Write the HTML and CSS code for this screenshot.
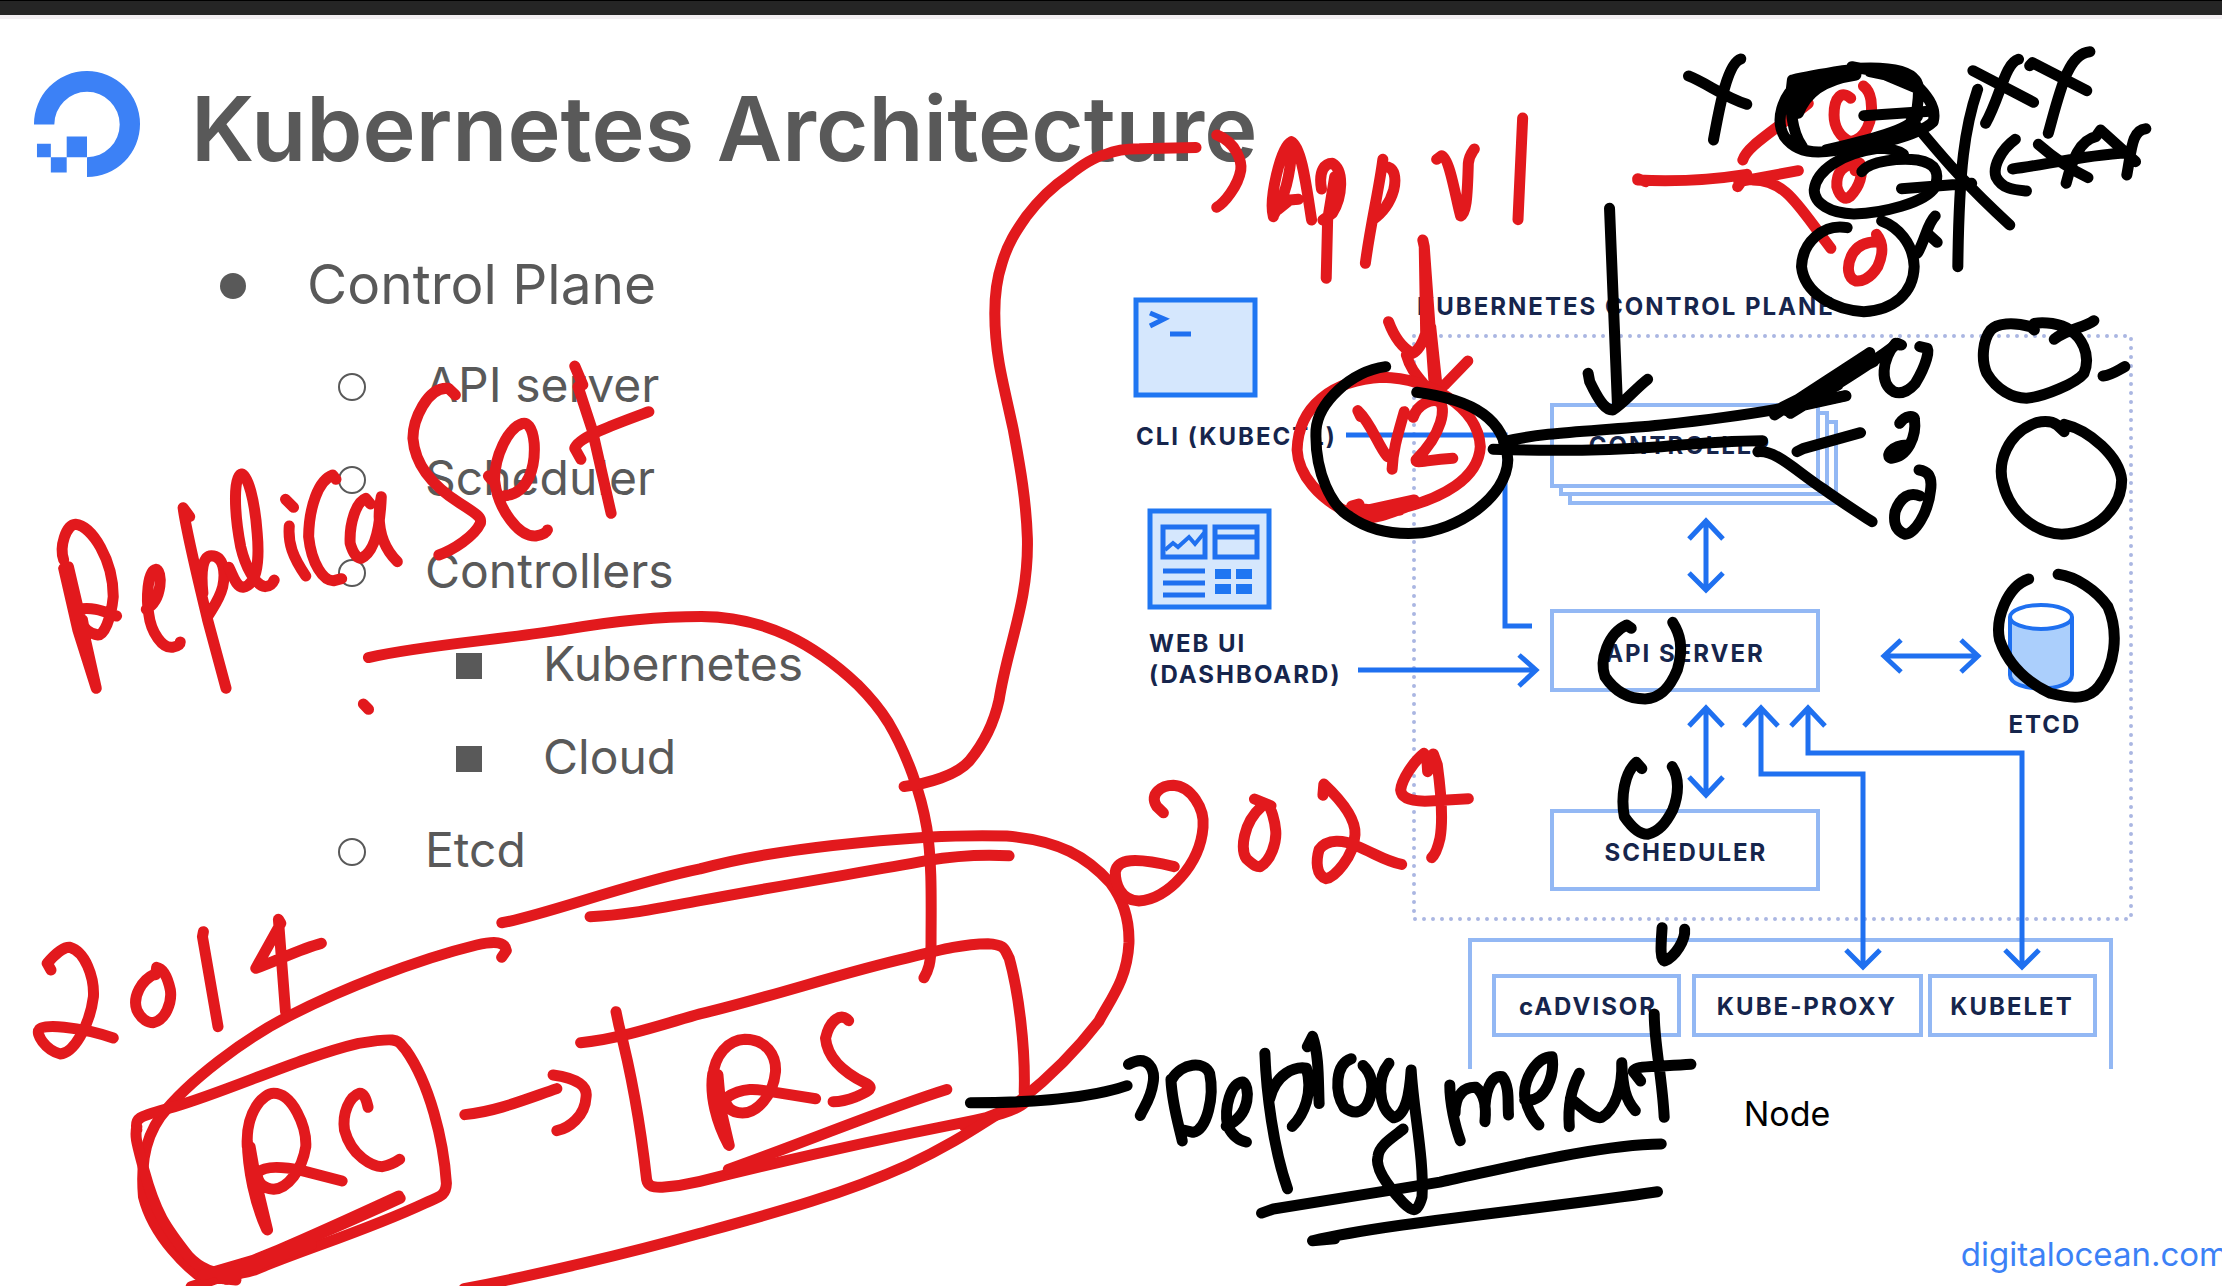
FILE: index.html
```html
<!DOCTYPE html>
<html lang="en">
<head>
<meta charset="utf-8">
<title>Kubernetes Architecture</title>
<link rel="stylesheet" href="styles.css">
</head>
<body>
<div class="screen">
  <div class="window-bar"></div>

  <header class="slide-header">
    <svg class="logo" viewBox="0 0 108 108" role="img" aria-label="DigitalOcean">
      <path d="M0 54A53.5 53.5 0 1 1 53.500 107V87A33 33 0 1 0 20.500 54Z"/>
      <path d="M33 66h20.500v21H33zM17 87h16v15.500H17zM3 73.500h14V87H3z"/>
    </svg>
    <h1>Kubernetes Architecture</h1>
  </header>

  <main class="slide-body">
    <ul class="outline">
      <li><div class="item item-top">Control Plane</div>
        <ul class="level-2">
          <li><div class="item">API server</div></li>
          <li><div class="item">Scheduler</div></li>
          <li><div class="item">Controllers</div>
            <ul class="level-3">
              <li><div class="item">Kubernetes</div></li>
              <li><div class="item">Cloud</div></li>
            </ul>
          </li>
          <li><div class="item">Etcd</div></li>
        </ul>
      </li>
    </ul>

    <figure class="architecture">
      <svg class="diagram" viewBox="1100 280 1122 800">
        <!-- control plane and node boundaries -->
        <rect class="plane" x="1414" y="336" width="717" height="583"/>
        <path class="box" d="M1470 1069V940H2111V1069"/>

        <!-- components -->
        <path class="box" d="M1570 495V503H1836V422H1827M1561 486V494H1827V413H1818"/>
        <rect class="box" x="1552" y="405" width="266" height="81"/>
        <rect class="box" x="1552" y="611" width="266" height="79"/>
        <rect class="box" x="1552" y="811" width="266" height="78"/>
        <rect class="box" x="1494" y="976" width="185" height="59"/>
        <rect class="box" x="1694" y="976" width="227" height="59"/>
        <rect class="box" x="1930" y="976" width="165" height="59"/>

        <!-- terminal -->
        <rect class="icon" x="1136" y="300" width="119" height="95"/>
        <path class="wire" d="M1150 313L1164 319L1150 326M1170 334H1191"/>

        <!-- dashboard -->
        <rect class="icon" x="1150" y="511" width="119" height="96"/>
        <path class="wire" d="M1163 527H1205V557H1163ZM1215 527H1257V557H1215ZM1215 537H1257M1163 571H1205M1163 583H1205M1163 595H1205"/>
        <path class="graph" d="M1165 550L1173 543L1178 547L1189 537L1195 544L1204 533"/>
        <path class="solid" d="M1215 569h16v10h-16zM1236 569h16v10h-16zM1215 584h16v10h-16zM1236 584h16v10h-16z"/>

        <!-- connections -->
        <path class="wire" d="M1346 435H1505V626H1532M1358 670H1536M1519 655L1536 670L1519 686"/>
        <path class="wire" d="M1706 523V588M1689 539L1706 521L1723 539M1689 573L1706 590L1723 573"/>
        <path class="wire" d="M1706 710V793M1689 726L1706 708L1723 726M1689 777L1706 795L1723 777"/>
        <path class="wire" d="M1761 710V774H1863V965M1744 726L1761 708L1778 726M1846 950L1863 967L1880 950"/>
        <path class="wire" d="M1808 710V753H2022V965M1791 726L1808 708L1825 726M2005 950L2022 967L2039 950"/>
        <path class="wire" d="M1884 656H1978M1901 640L1884 656L1901 672M1961 640L1978 656L1961 672"/>

        <!-- etcd -->
        <path class="drum" d="M2010 617V675C2010 693 2072 693 2072 675V617"/>
        <ellipse class="drum-top" cx="2041" cy="617" rx="31" ry="12"/>

        <g class="label">
          <text x="1417" y="315">KUBERNETES CONTROL PLANE</text>
          <text x="1136" y="445">CLI (KUBECTL)</text>
          <text x="1149" y="652">WEB UI</text>
          <text x="1149" y="683">(DASHBOARD)</text>
          <g text-anchor="middle">
            <text x="1680" y="454">CONTROLLER</text>
            <text x="1685" y="662">API SERVER</text>
            <text x="1686" y="861">SCHEDULER</text>
            <text x="2045" y="733">ETCD</text>
            <text x="1588" y="1015">cADVISOR</text>
            <text x="1807" y="1015">KUBE-PROXY</text>
            <text x="2012" y="1015">KUBELET</text>
          </g>
        </g>
      </svg>
      <figcaption>Node</figcaption>
    </figure>
  </main>

  <footer class="slide-footer"><a href="#">digitalocean.com</a></footer>

  <!-- freehand pen strokes over the slide, grouped by board region -->
  <svg class="ink" viewBox="0 0 2222 1286" aria-hidden="true">
    <g class="red">
      <g transform="translate(0 400) scale(.4719 .3333)">
        <path d="M135 505L165 690L204 865M145 500L178 700L204 865M135 480C125 440 140 375 160 373C195 378 240 480 240 590C235 660 220 705 208 705C195 702 175 690 175 660M165 628C200 620 220 635 247 648M150 560L190 780"/>
        <path d="M310 628C345 600 345 510 330 508C312 512 310 600 315 640C320 700 345 745 365 742C380 738 382 733 382 726"/>
        <path d="M402 350L388 323C395 400 430 600 440 660L479 865M430 580C425 510 430 468 448 467C475 468 478 520 472 560C465 600 450 625 440 650"/>
        <path d="M485 502C495 530 500 560 515 562C545 555 550 480 545 400C540 300 525 225 512 222C495 225 495 330 510 440C520 500 540 555 562 560C575 558 578 550 581 540"/>
        <path d="M605 298L622 322M613 378C610 430 620 470 648 528"/>
        <path d="M712 238L705 225C675 240 655 320 654 410C660 490 685 545 708 542L724 536"/>
        <path d="M785 312L775 295C755 305 740 370 742 430C750 470 760 475 765 475C790 460 805 400 808 290C795 380 810 440 842 485"/>
        <path d="M965 -15L950 -35C905 -40 875 60 875 115C880 210 930 270 975 310C1020 350 1020 355 1018 370C1005 410 960 450 930 465"/>
        <path d="M1035 228L1042 240M1070 287C1120 280 1135 200 1132 130C1128 75 1115 68 1108 70C1075 85 1048 170 1048 240C1055 330 1100 410 1135 408C1150 405 1158 398 1160 390"/>
        <path d="M1218 -102L1235 -45L1225 -40L1255 90L1295 340M1375 35C1310 70 1225 110 1218 145L1231 178"/>
        <path d="M770 912L781 928"/>
      </g>
      <g transform="scale(1.4171)">
        <path d="M260 464C300 455 350 452 400 444C440 437 470 435 495 435C540 435 575 455 605 483C612 490 622 502 627 510C640 532 650 560 654 584C658 610 657 640 657 666C657 680 655 685 652 690"/>
        <path d="M638 555C655 553 675 547 684 537C694 525 701 512 705 494C711 455 726 425 725 380C724 350 719 325 715 303C710 280 707 268 705 256C703 244 702 232 702 221C702 205 704 195 707 186C711 172 717 163 724 153C733 141 742 132 754 124C765 115 772 111 780 109C787 106 795 105 804 105L844 104"/>
      </g>
      <g transform="translate(0 820) scale(.4719 .3333)">
        <path d="M108 450L100 430C115 405 135 380 148 382C180 395 200 470 198 530C190 620 155 700 128 702C95 690 75 640 83 630C85 610 170 620 240 654"/>
        <path d="M328 462C300 480 280 530 290 570C300 600 315 608 325 608C350 600 365 550 361 510C355 470 345 445 332 442L330 464"/>
        <path d="M431 335L429 350L462 620M681 370C640 385 590 420 542 445L595 310L590 298L605 575"/>
        <path d="M1063 412L1073 392C1070 365 1050 362 1010 375C880 420 720 510 610 590C520 655 400 780 340 890C300 970 300 1060 304 1130C325 1250 400 1350 440 1385L470 1370L405 1400M430 1370L500 1380"/>
        <path d="M290 930C285 890 295 890 370 860C480 815 640 710 760 670C850 650 840 660 860 690C910 790 940 960 946 1090C945 1130 930 1130 900 1150C780 1230 640 1290 540 1350C460 1385 420 1340 400 1310C350 1220 330 1180 305 1050C290 970 285 950 290 920"/>
        <path d="M848 1135C750 1200 600 1290 470 1370M845 1128C750 1190 640 1260 590 1290L470 1360M430 1365L600 1295M480 1378L640 1275M500 1355L660 1275"/>
        <path d="M530 980L545 1100L567 1230M524 960C525 1050 540 1150 565 1228M524 980C520 870 560 820 580 820C620 820 650 920 648 980C640 1050 610 1105 580 1108C555 1105 545 1085 545 1060C560 1035 600 1040 640 1052L725 1083"/>
        <path d="M780 862C775 830 770 820 762 820C740 830 725 880 730 930C745 1010 790 1040 810 1040C830 1035 840 1025 847 1018"/>
        <path d="M985 884C1050 875 1110 840 1180 806M1172 765C1225 775 1245 800 1242 830C1240 890 1205 925 1180 932"/>
      </g>
      <g transform="translate(700 700) scale(.4719 .3737)">
        <path d="M-253 917C-160 905 -60 860 0 840C150 795 300 730 440 690C520 665 560 653 610 652C650 655 645 670 655 690C675 780 690 930 687 1050"/>
        <path d="M-178 834L-172 870C-145 1000 -125 1150 -113 1284C-110 1305 -95 1303 -80 1304C-40 1300 0 1288 0 1288C200 1225 400 1170 560 1130C620 1115 670 1100 690 1075M560 1140L680 1082"/>
        <path d="M523 1042C400 1090 250 1170 60 1256L150 1240"/>
        <path d="M27 1000C20 1060 35 1130 60 1190M38 1003L45 1100L62 1192M27 1010C30 950 60 910 95 908C140 908 162 950 160 995C155 1060 120 1105 90 1105C65 1105 52 1085 55 1065C90 1035 120 1040 160 1050L245 1067"/>
        <path d="M315 858C300 835 275 855 266 905C270 960 310 1000 350 1025C375 1040 350 1050 330 1062C310 1072 295 1075 282 1075"/>
        <path d="M-420 596C-340 580 -150 490 0 452C150 400 350 378 480 367C560 362 600 362 650 364C760 375 820 420 870 490C900 540 910 600 909 650C905 750 870 800 845 860C790 950 740 1010 680 1070C600 1130 550 1180 440 1245C300 1325 150 1375 0 1427C-150 1480 -350 1540 -500 1575"/>
        <path d="M-233 580C-150 575 -80 555 0 537C200 490 350 460 480 430C550 415 600 413 655 417"/>
        <path d="M982 302L968 285C950 250 980 228 1003 228C1040 230 1070 290 1066 340C1060 440 990 535 930 538C890 535 880 490 880 460C885 425 920 420 1005 446"/>
        <path d="M1175 265L1210 283M1190 285C1150 330 1145 400 1158 425C1175 445 1180 446 1187 446C1210 430 1222 380 1220 350C1218 320 1210 290 1205 285"/>
        <path d="M1320 255L1322 225C1360 270 1390 320 1388 360C1385 420 1345 475 1327 478C1305 470 1305 430 1312 400C1330 370 1365 375 1390 390C1430 410 1450 430 1487 440"/>
      </g>
      <g transform="translate(1380 730) scale(.3333)">
        <path d="M143 125L140 80L132 70C100 95 65 150 62 180C65 210 110 215 150 213L265 206M160 72L172 105C185 200 188 280 180 325C172 360 165 375 155 383"/>
      </g>
      <g transform="translate(1380 90) scale(.3333)">
        <path d="M170 208L185 197C210 205 230 340 242 378C258 370 262 330 265 220C268 195 278 185 283 177M428 84L414 389"/>
      </g>
      <g transform="translate(700 0) scale(.4719 .3333)">
        <path d="M1095 405C1140 430 1148 490 1146 510C1140 560 1110 610 1095 622"/>
        <path d="M1215 650C1205 600 1230 440 1253 425C1275 440 1285 560 1296 660M1216 645C1240 590 1250 530 1255 440M1225 628L1250 600L1268 598"/>
        <path d="M1317 567C1310 510 1325 490 1340 490C1365 510 1362 590 1340 640L1320 660M1345 530L1330 660L1327 835"/>
        <path d="M1447 478C1440 560 1420 680 1410 790M1447 500C1475 495 1475 540 1470 570C1460 620 1440 645 1425 660"/>
      </g>
      <g transform="translate(1100 260) scale(.3571 .3333)">
        <path d="M904 -60L908 -40L936 375M908 -40L912 220C900 260 885 275 875 280C840 260 820 220 808 185M858 285C870 330 890 350 905 370M1030 303L965 375L944 380L926 200L942 370"/>
        <path d="M705 738L725 732L730 755L880 720C800 745 760 760 710 765C610 720 555 640 552 570C555 440 650 360 790 352C920 355 1060 440 1065 560C1060 660 950 715 860 740C810 760 780 775 740 775M720 745L800 755M730 768L840 750"/>
        <path d="M730 470L722 452C760 490 780 560 805 590M852 455C835 520 820 570 818 628M877 472C890 430 930 415 950 425C970 440 960 520 885 600C885 612 910 600 988 595"/>
      </g>
      <g transform="translate(1600 0) scale(.3967 .3333)">
        <path d="M95 540C180 545 280 540 370 523L347 560M95 536L115 545M360 480C370 440 430 400 525 310M350 545L500 512M385 540C470 540 500 620 582 745"/>
        <path d="M632 295C610 270 590 290 590 345C590 380 605 410 630 425C670 420 690 360 683 300C680 280 672 265 664 258"/>
        <path d="M643 512L655 490C610 490 595 520 597 560C605 595 620 600 630 590C655 560 665 520 655 490"/>
        <path d="M697 703C715 730 715 760 700 800C680 840 655 845 645 843C625 835 620 800 635 765C650 730 680 725 700 725Z"/>
      </g>
    </g>

    <g class="black">
      <g transform="translate(1100 260) scale(.3571 .3333)">
        <path d="M800 320C700 335 610 430 605 510C600 640 650 740 700 770C760 815 830 822 880 820C1000 815 1140 710 1142 600C1135 480 1050 420 887 397"/>
      </g>
      <g transform="translate(1600 0) scale(.3967 .3333)">
        <path d="M24 625C30 800 38 1000 44 1215M-30 1120L-26 1145C0 1210 15 1230 32 1230C60 1210 90 1165 120 1138"/>
        <path d="M440 1245C560 1150 640 1090 680 1058M480 1240C560 1180 690 1090 750 1030L760 1035M460 1222L690 1085M470 1232L620 1125M490 1225L600 1155M440 1235L620 1188"/>
        <path d="M755 1035L745 1030C710 1080 705 1150 740 1175C760 1185 780 1170 795 1150C825 1090 830 1050 825 1045L806 1040"/>
        <path d="M1095 990L1085 980C1040 965 1000 970 985 990C965 1020 960 1080 975 1120C1000 1170 1040 1195 1075 1195C1120 1190 1200 1150 1220 1120C1240 1060 1210 1010 1185 990C1160 970 1120 965 1095 970M1145 1018C1180 985 1220 985 1245 962M1268 1128C1290 1125 1300 1115 1323 1100"/>
        <path d="M223 228C270 250 310 290 370 313M355 177C320 190 300 330 286 420"/>
        <path d="M645 225C560 240 520 280 500 340M485 240C540 225 600 215 650 205C730 200 780 215 795 240C810 260 800 310 798 340M500 250C460 290 440 360 465 410C490 450 530 460 570 455C680 440 800 410 840 365C850 320 820 280 790 245M485 240C475 320 485 400 510 440M635 200L700 215L800 265M570 450C680 420 780 390 800 350M495 265L640 212M500 255L580 240M680 215L780 240M500 300L530 245L490 290M640 430L760 395"/>
        <path d="M665 347L840 333M785 360C850 450 900 530 1033 675M760 566L937 550M952 268C920 380 905 500 902 800"/>
        <path d="M660 515C680 480 760 475 800 480C850 490 855 520 845 560C820 610 710 640 640 642C580 640 540 610 540 570C545 510 610 460 700 445C740 445 755 455 765 463"/>
        <path d="M623 683C560 670 510 730 508 800C515 880 590 930 665 935C740 930 790 880 792 800C790 730 750 680 710 663M845 648C825 670 820 720 800 760M825 700L850 727"/>
        <path d="M940 212L1093 307M1055 178C1020 190 1010 290 972 370M1083 197L1090 188L1227 272M1235 155C1180 160 1160 270 1130 400"/>
        <path d="M1047 418C1010 450 990 500 998 530C1015 570 1050 570 1075 573M1105 433C1150 480 1190 510 1230 533M1175 550C1190 480 1210 420 1250 410L1262 390L1350 485M1040 507C1120 495 1220 465 1330 458M1376 386C1340 390 1340 450 1328 525"/>
      </g>
      <g transform="translate(1500 380) scale(.4605 .3333)">
        <path d="M-15 208C150 215 250 210 350 200C430 190 520 182 570 182M8 185C100 155 200 155 350 135C450 120 530 105 600 88C650 75 700 60 750 47"/>
        <path d="M560 215C600 210 640 270 700 325C740 365 780 400 808 425M645 215L660 205L783 158"/>
        <path d="M868 130C880 105 900 105 900 118C905 170 885 230 850 235C835 230 850 195 885 195"/>
        <path d="M910 270C935 275 938 300 935 330C930 400 900 462 880 463C855 450 855 420 858 395C870 350 890 335 912 348"/>
        <path d="M1225 155L1210 135C1200 125 1185 122 1165 128C1100 160 1080 250 1092 310C1110 410 1170 460 1220 463C1300 455 1350 380 1350 300C1345 230 1280 150 1225 133"/>
        <path d="M1148 597C1100 620 1075 720 1085 780C1105 860 1150 910 1195 940C1250 960 1280 955 1300 920C1335 860 1345 760 1320 680C1295 630 1250 590 1212 583"/>
        <path d="M285 745L275 735C235 760 215 840 228 890C250 935 280 957 315 957C350 955 370 920 385 870C400 800 390 760 375 727"/>
        <path d="M308 1166L296 1147C270 1180 262 1250 270 1310C290 1350 305 1363 320 1363C345 1355 360 1330 375 1290C390 1240 388 1190 374 1160"/>
      </g>
      <g transform="translate(700 700) scale(.4719 .3737)">
        <path d="M573 1078C700 1078 830 1065 905 1032M908 975C950 945 965 990 960 1025C955 1070 940 1090 933 1112"/>
        <path d="M998 1015C1000 1080 1015 1140 1022 1180M1000 1015C1020 970 1070 965 1080 1000C1090 1060 1075 1150 1045 1157L1022 1150"/>
        <path d="M1115 1140C1170 1110 1165 1030 1150 1022C1125 1025 1110 1090 1118 1140C1130 1170 1145 1180 1158 1183"/>
        <path d="M1197 945C1200 1050 1215 1200 1245 1308M1207 1068C1220 1000 1260 980 1285 985C1300 1050 1280 1110 1255 1141M1287 928L1298 900C1312 950 1310 1020 1312 1080"/>
        <path d="M1380 960C1345 975 1345 1050 1365 1090C1385 1110 1405 1105 1415 1080C1430 1040 1425 1000 1405 978M1460 972C1435 1010 1435 1090 1470 1118C1500 1110 1505 1030 1507 990C1512 1100 1535 1230 1530 1330C1520 1375 1510 1370 1490 1345C1450 1290 1430 1250 1437 1220C1440 1190 1470 1170 1490 1148"/>
        <path d="M1190 1373L1215 1362C1350 1335 1450 1315 1568 1290C1700 1255 1900 1190 2037 1188M1298 1447L1345 1442M1298 1447C1450 1400 1800 1360 2029 1316"/>
      </g>
      <g transform="translate(1400 860) scale(.5242 .3333)">
        <path d="M500 203C498 250 495 300 505 303C525 290 545 240 543 208"/>
        <path d="M95 675C95 730 105 800 115 842M105 760C105 700 125 680 145 682C160 700 165 740 162 785M162 740C165 670 180 645 195 650C210 680 205 730 207 765"/>
        <path d="M238 720C280 730 295 640 290 590C260 590 235 660 238 710C245 760 255 780 265 795"/>
        <path d="M342 640C325 690 320 740 323 800M325 715C345 740 370 780 385 772C410 750 425 680 423 608C425 680 430 720 449 752"/>
        <path d="M485 462C485 550 500 650 504 772M555 613C500 620 445 615 445 635L459 663"/>
      </g>
    </g>
  </svg>
</div>
</body>
</html>
```
FILE: styles.css
```css
* {
  box-sizing: border-box;
}

body {
  margin: 0;
  background: #fff;
  color: #595959;
  font-family: Inter, "Liberation Sans", sans-serif;
}

.screen {
  position: relative;
  display: flex;
  flex-direction: column;
  min-height: 100vh;
  overflow: hidden;
}

.window-bar {
  height: 19px;
  background: #252525;
  border-top: 1px solid #000;
  border-bottom: 4px solid #f3eff2;
}

.slide-header {
  display: flex;
  align-items: center;
  gap: 50px;
  padding: 52px 34px 0;
}

.logo {
  width: 107px;
  height: 107px;
  fill: #3c81f6;
}

h1 {
  margin: 0;
  padding-top: 8px;
  font-size: 90px;
  font-weight: 600;
  line-height: 96px;
}

.slide-body {
  display: grid;
  grid-template-columns: 1100fr 1122fr;
}

.outline,
.outline ul {
  margin: 0;
  padding: 0;
  list-style: none;
}

.outline {
  padding: 56px 0 0 220px;
}

.outline ul {
  padding-left: 118px;
}

.item {
  display: flex;
  align-items: center;
  gap: 61px;
  font-size: 48px;
  line-height: 93px;
}

.item-top {
  margin-bottom: 4px;
  font-size: 55px;
  line-height: 100px;
}

.item::before {
  content: "";
  flex: none;
  width: 26px;
  height: 26px;
  margin-top: 4px;
}

.item-top::before {
  border-radius: 50%;
  background: #595959;
}

.level-2 .item {
  gap: 59px;
}

.level-2 .item::before {
  width: 24px;
  height: 24px;
  border: 2px solid #595959;
  border-radius: 50%;
}

.level-3 .item {
  gap: 61px;
}

.level-3 .item::before {
  width: 26px;
  height: 26px;
  border: 0;
  border-radius: 0;
  background: #595959;
}

.architecture {
  margin: 102px 0 0;
}

.diagram {
  display: block;
  width: 100%;
}

.diagram .plane {
  fill: none;
  stroke: #aab6e2;
  stroke-width: 4;
  stroke-linecap: round;
  stroke-dasharray: 0 9;
}

.diagram .box {
  fill: none;
  stroke: #93b8f4;
  stroke-width: 4;
}

.diagram .icon {
  fill: #d5e7fd;
  stroke: #1f76f2;
  stroke-width: 5;
}

.diagram .wire {
  fill: none;
  stroke: #1f70f0;
  stroke-width: 5;
}

.diagram .graph {
  fill: none;
  stroke: #1f70f0;
  stroke-width: 4;
}

.diagram .solid {
  fill: #1f76f2;
}

.diagram .drum,
.diagram .drum-top {
  fill: #abcffc;
  stroke: #1f70f0;
  stroke-width: 4;
}

.diagram .drum-top {
  fill: #fff;
}

.diagram .label {
  fill: #16254c;
  font-size: 24px;
  font-weight: 700;
  letter-spacing: 2px;
}

figcaption {
  margin-top: 14px;
  padding-left: 252px;
  color: #000;
  font-size: 34px;
  line-height: 40px;
  text-align: center;
}

.slide-footer {
  display: flex;
  justify-content: flex-end;
  margin-top: auto;
  margin-right: -6px;
  padding-bottom: 12px;
}

.slide-footer a {
  color: #3c81f6;
  font-size: 33px;
  line-height: 40px;
  text-decoration: none;
}

.ink {
  position: absolute;
  top: 0;
  left: 0;
  width: 100%;
  pointer-events: none;
}

.ink path {
  fill: none;
  stroke-width: 11px;
  stroke-linecap: round;
  stroke-linejoin: round;
  vector-effect: non-scaling-stroke;
}

.ink .red {
  stroke: #e2191d;
}

.ink .black {
  stroke: #000;
}
```
